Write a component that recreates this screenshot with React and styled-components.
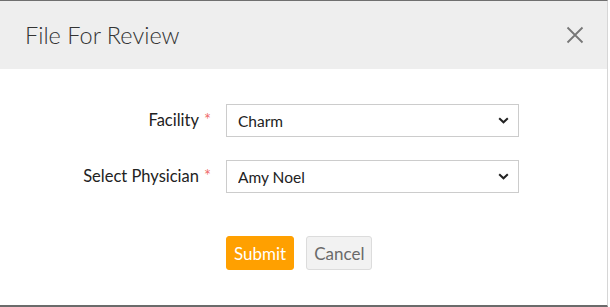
import React from "react";
import styled, { createGlobalStyle } from "styled-components";

const GlobalStyle = createGlobalStyle`
  html, body {
    margin: 0;
    padding: 0;
    background: #ffffff;
    font-family: Lato, "Open Sans", "Liberation Sans", sans-serif;
  }
`;

const Modal = styled.div`
  width: 608px;
  height: 307px;
  border-top: 1px solid #6f6f6f;
  border-right: 1px solid #d6d6d6;
  border-bottom: 2px solid #6b6b6b;
  background: #ffffff;
  display: flex;
  flex-direction: column;
  box-sizing: border-box;
`;

const Header = styled.div`
  height: 68px;
  background: #eeeeee;
  display: flex;
  align-items: center;
  justify-content: space-between;
  padding: 0 23px 0 25px;
`;

const Title = styled.h4`
  margin: 0;
  font-size: 23.5px;
  font-weight: 300;
  color: #333333;
`;

const CloseButton = styled.button`
  border: none;
  background: none;
  padding: 0;
  width: 18px;
  height: 18px;
  display: flex;
  cursor: pointer;
`;

const Body = styled.form`
  display: flex;
  flex-direction: column;
  padding-top: 35px;
  gap: 23px;
`;

const Row = styled.div`
  display: flex;
  align-items: center;
`;

const Label = styled.label`
  width: 211px;
  margin-right: 15px;
  padding-bottom: 2px;
  text-align: right;
  font-size: 16.5px;
  color: #222222;
`;

const Required = styled.span`
  color: #f06f6f;
  margin-left: 5px;
`;

const SelectWrap = styled.div`
  position: relative;
  width: 293px;
  height: 33px;
`;

const Select = styled.select`
  appearance: none;
  width: 100%;
  height: 100%;
  border: 1px solid #cccccc;
  border-radius: 0;
  background: #ffffff;
  padding: 0 30px 0 11px;
  font-family: inherit;
  font-size: 15.5px;
  color: #222222;
  outline: none;
`;

const Chevron = styled.svg`
  position: absolute;
  right: 10px;
  top: 13px;
  pointer-events: none;
`;

const Actions = styled.div`
  display: flex;
  gap: 12px;
  margin-left: 226px;
  margin-top: 20px;
`;

const Button = styled.button`
  height: 34px;
  padding: 0 7px;
  border-radius: 3px;
  font-family: inherit;
  font-size: 17px;
  cursor: pointer;
  background: ${(p) => (p.$primary ? "#ffa000" : "#f2f2f2")};
  color: ${(p) => (p.$primary ? "#ffffff" : "#6a6a6a")};
  border: 1px solid ${(p) => (p.$primary ? "#ffa000" : "#dcdcdc")};
`;

const Field = ({ label, value }) => (
  <Row>
    <Label>
      {label}
      <Required>*</Required>
    </Label>
    <SelectWrap>
      <Select defaultValue={value}>
        <option>{value}</option>
      </Select>
      <Chevron width="11" height="7" viewBox="0 0 11 7">
        <path d="M1.2 1.2 L5.5 5.3 L9.8 1.2" fill="none" stroke="#222" strokeWidth="2" />
      </Chevron>
    </SelectWrap>
  </Row>
);

export default function App() {
  return (
    <>
      <GlobalStyle />
      <Modal>
        <Header>
          <Title>File For Review</Title>
          <CloseButton aria-label="Close">
            <svg width="18" height="18" viewBox="0 0 18 18">
              <path d="M1.5 1.5 L16.5 16.5 M16.5 1.5 L1.5 16.5" stroke="#777" strokeWidth="1.8" />
            </svg>
          </CloseButton>
        </Header>
        <Body onSubmit={(e) => e.preventDefault()}>
          <Field label="Facility" value="Charm" />
          <Field label="Select Physician" value="Amy Noel" />
          <Actions>
            <Button type="submit" $primary>Submit</Button>
            <Button type="button">Cancel</Button>
          </Actions>
        </Body>
      </Modal>
    </>
  );
}
